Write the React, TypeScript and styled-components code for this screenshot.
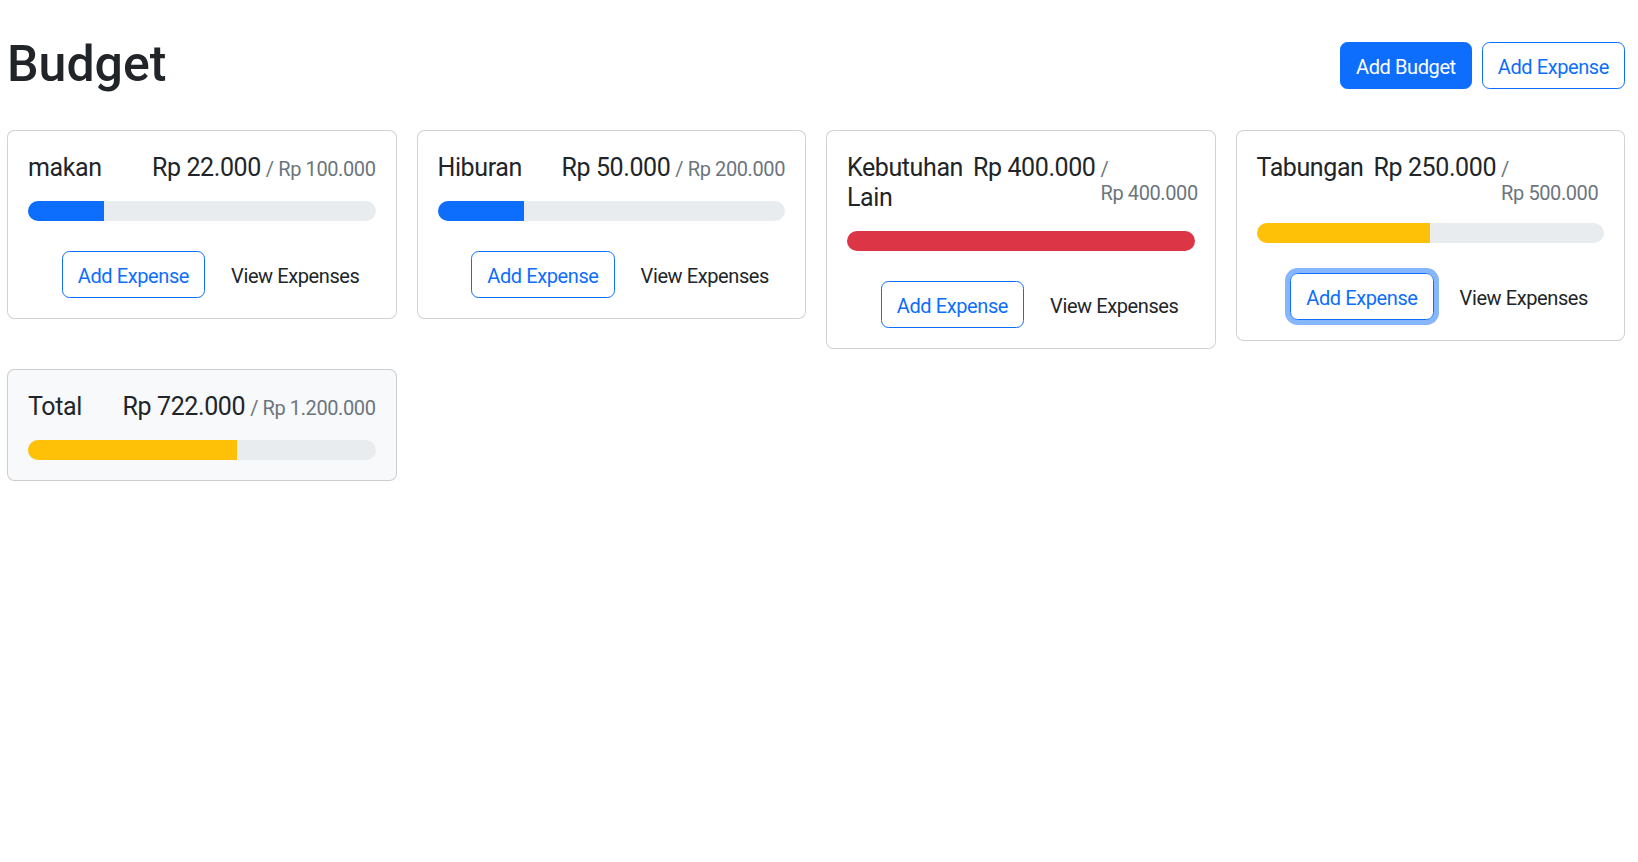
import React from "react";
import styled, { createGlobalStyle, css } from "styled-components";

const GlobalStyle = createGlobalStyle`
  *, *::before, *::after { box-sizing: border-box; }
  body {
    margin: 0;
    font-family: Roboto, "Liberation Sans", sans-serif;
    font-size: 20px;
    line-height: 1.5;
    letter-spacing: -0.02em;
    color: #212529;
    background: #fff;
  }
`;

const Page = styled.div`
  padding: 30px 13px 30px 7px;
`;

const Header = styled.div`
  display: flex;
  align-items: center;
  gap: 10px;
  margin-bottom: 30px;
`;

const Heading = styled.h1`
  margin: 0 auto 6px 0;
  padding-top: 4px;
  font-size: 50px;
  font-weight: 500;
  line-height: 1.2;
  letter-spacing: 0;
`;

type Variant = "primary" | "outline" | "plain";

const Button = styled.button<{ $variant: Variant; $focused?: boolean }>`
  font-family: inherit;
  font-size: 20px;
  letter-spacing: -0.02em;
  line-height: 30px;
  padding: 9px 15px 6px;
  border-radius: 7.5px;
  border: 1px solid transparent;
  background: transparent;
  color: #212529;
  cursor: pointer;
  white-space: nowrap;
  ${({ $variant }) =>
    $variant === "primary"
      ? css`
          background: #0d6efd;
          border-color: #0d6efd;
          color: #fff;
        `
      : $variant === "outline"
      ? css`
          border-color: #0d6efd;
          color: #0d6efd;
        `
      : css`
          color: #212529;
        `}
  ${({ $focused }) =>
    $focused &&
    css`
      box-shadow: 0 0 0 5px rgba(13, 110, 253, 0.5);
    `}
`;

const Grid = styled.div`
  display: grid;
  grid-template-columns: repeat(auto-fill, minmax(375px, 1fr));
  gap: 20px;
  align-items: start;
`;

const Card = styled.div<{ $light?: boolean }>`
  border: 1px solid rgba(0, 0, 0, 0.175);
  border-radius: 7.5px;
  background: ${({ $light }) => ($light ? "#f8f9fa" : "#fff")};
  padding: 20px;
  min-width: 0;
`;

const CardTitle = styled.h5`
  display: flex;
  justify-content: space-between;
  align-items: baseline;
  margin: 0 0 18px;
  padding-top: 2px;
  font-size: 25px;
  font-weight: 400;
  line-height: 1.2;
`;

const Name = styled.div`
  margin-right: 10px;
`;

const Amounts = styled.div`
  display: flex;
  align-items: baseline;
`;

const Max = styled.span`
  font-size: 20px;
  color: #6c757d;
  margin-left: 5px;
`;

const Progress = styled.div`
  display: flex;
  height: 20px;
  border-radius: 50rem;
  background: #e9ecef;
  overflow: hidden;
`;

const barColors = {
  primary: "#0d6efd",
  warning: "#ffc107",
  danger: "#dc3545",
};

const Bar = styled.div<{ $tone: keyof typeof barColors }>`
  height: 100%;
  background: ${({ $tone }) => barColors[$tone]};
`;

const Actions = styled.div`
  display: flex;
  justify-content: flex-end;
  gap: 10px;
  margin-top: 30px;
`;

const fmt = (n: number) =>
  "Rp\u00a0" + n.toString().replace(/\B(?=(\d{3})+(?!\d))/g, ".");

const tone = (a: number, m: number): keyof typeof barColors => {
  const r = a / m;
  if (r < 0.5) return "primary";
  if (r < 0.75) return "warning";
  return "danger";
};

type BudgetProps = {
  name: string;
  amount: number;
  max: number;
  light?: boolean;
  hideButtons?: boolean;
  focused?: boolean;
};

function BudgetCard({ name, amount, max, light, hideButtons, focused }: BudgetProps) {
  return (
    <Card $light={light}>
      <CardTitle>
        <Name>{name}</Name>
        <Amounts>
          {fmt(amount)}
          <Max>/ {fmt(max)}</Max>
        </Amounts>
      </CardTitle>
      <Progress>
        <Bar
          $tone={tone(amount, max)}
          style={{ width: `${Math.min(100, (amount / max) * 100)}%` }}
        />
      </Progress>
      {!hideButtons && (
        <Actions>
          <Button $variant="outline" $focused={focused}>
            Add Expense
          </Button>
          <Button $variant="plain">View Expenses</Button>
        </Actions>
      )}
    </Card>
  );
}

const budgets = [
  { name: "makan", amount: 22000, max: 100000 },
  { name: "Hiburan", amount: 50000, max: 200000 },
  { name: "Kebutuhan Lain", amount: 400000, max: 400000 },
  { name: "Tabungan", amount: 250000, max: 500000, focused: true },
];

export default function App() {
  const total = budgets.reduce((s, b) => s + b.amount, 0);
  const totalMax = budgets.reduce((s, b) => s + b.max, 0);
  return (
    <>
      <GlobalStyle />
      <Page>
        <Header>
          <Heading>Budget</Heading>
          <Button $variant="primary">Add Budget</Button>
          <Button $variant="outline">Add Expense</Button>
        </Header>
        <Grid>
          {budgets.map((b) => (
            <BudgetCard key={b.name} {...b} />
          ))}
          <BudgetCard name="Total" amount={total} max={totalMax} light hideButtons />
        </Grid>
      </Page>
    </>
  );
}
